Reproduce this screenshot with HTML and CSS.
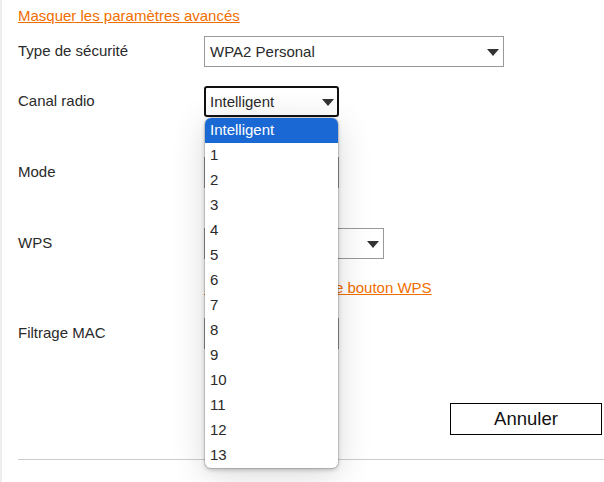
FILE: index.html
```html
<!DOCTYPE html>
<html lang="fr">
<head>
<meta charset="utf-8">
<link rel="stylesheet" href="styles.css">
</head>
<body>
<div class="page">
  <a class="link top-link" href="#">Masquer les paramètres avancés</a>

  <div class="row row-security">
    <div class="label">Type de sécurité</div>
    <div class="select wide">WPA2 Personal<span class="caret"></span></div>
  </div>

  <div class="row row-canal">
    <div class="label">Canal radio</div>
    <div class="select-wrap">
      <div class="select narrow focused">Intelligent<span class="caret"></span></div>
      <ul class="dropdown">
        <li class="selected">Intelligent</li>
        <li>1</li><li>2</li><li>3</li><li>4</li><li>5</li><li>6</li>
        <li>7</li><li>8</li><li>9</li><li>10</li><li>11</li><li>12</li><li>13</li>
      </ul>
    </div>
  </div>

  <div class="row row-mode">
    <div class="label">Mode</div>
    <div class="select narrow"><span class="caret"></span></div>
  </div>

  <div class="row row-wps">
    <div class="label">WPS</div>
    <div class="select medium"><span class="caret"></span></div>
  </div>

  <div class="row row-wpslink">
    <div class="label"></div>
    <a class="link wps-link" href="#">Synchroniser avec le bouton WPS</a>
  </div>

  <div class="row row-mac">
    <div class="label">Filtrage MAC</div>
    <div class="select narrow"><span class="caret"></span></div>
  </div>

  <div class="actions">
    <button class="btn">Annuler</button>
  </div>

  <hr class="sep">
</div>
</body>
</html>
```

FILE: styles.css
```css
html, body {
  margin: 0;
  padding: 0;
  background: #fff;
}
body {
  font-family: "Liberation Sans", Arial, sans-serif;
  font-size: 15px;
  color: #2a2a2a;
}
.page {
  border-left: 2px solid #eeeeee;
  padding-left: 16px;
  min-height: 482px;
  box-sizing: border-box;
}
.link {
  color: #f16e00;
  text-decoration: underline;
  font-size: 15px;
}
.top-link {
  display: block;
  padding-top: 7px;
  line-height: 17px;
}
.row {
  display: flex;
  align-items: center;
}
.label {
  width: 186px;
  flex: none;
  font-size: 15px;
  color: #2a2a2a;
  position: relative;
  top: -1px;
}
.select {
  position: relative;
  box-sizing: border-box;
  height: 31px;
  border: 1px solid #999;
  padding-left: 5px;
  display: flex;
  align-items: center;
  font-size: 15px;
  color: #2a2a2a;
  background: #fff;
}
.caret {
  position: absolute;
  right: 4px;
  top: 50%;
  margin-top: -3px;
  width: 0;
  height: 0;
  border-left: 6.5px solid transparent;
  border-right: 6.5px solid transparent;
  border-top: 7px solid #333;
}
.wide { width: 300px; }
.narrow { width: 135px; }
.medium { width: 180px; }
.focused {
  border: 2px solid #111;
  border-radius: 3px;
  padding-left: 4px;
}
.focused .caret { right: 3px; }
.row-security { margin-top: 12px; }
.row-canal { margin-top: 19px; }
.row-mode { margin-top: 40px; }
.row-wps { margin-top: 40px; }
.row-wpslink { margin-top: 20px; height: 17px; }
.row-mac { margin-top: 22px; }
.select-wrap {
  position: relative;
}
.dropdown {
  position: absolute;
  z-index: 10;
  left: 1px;
  top: 32px;
  width: 133px;
  margin: 0;
  padding: 0;
  list-style: none;
  background: #fff;
  border-radius: 6px;
  overflow: hidden;
  box-shadow: 0 0 0 1px rgba(0,0,0,0.12), 0 2px 4px rgba(0,0,0,0.22), 0 6px 34px rgba(0,0,0,0.16);
}
.dropdown li {
  height: 25px;
  line-height: 24px;
  padding-left: 5px;
  font-size: 15px;
  color: #2a2a2a;
}
.dropdown li.selected {
  background: #1a68d3;
  color: #fff;
}
.actions {
  display: flex;
  justify-content: flex-end;
  margin-top: 54px;
  padding-right: 2px;
}
.btn {
  width: 152px;
  height: 32px;
  border: 1px solid #000;
  background: #fff;
  font-family: "Liberation Sans", Arial, sans-serif;
  font-size: 18.5px;
  color: #111;
  padding: 0;
  border-radius: 0;
}
.sep {
  margin: 24px 0 0 0;
  border: 0;
  border-top: 1px solid #cccccc;
  height: 0;
}
```
